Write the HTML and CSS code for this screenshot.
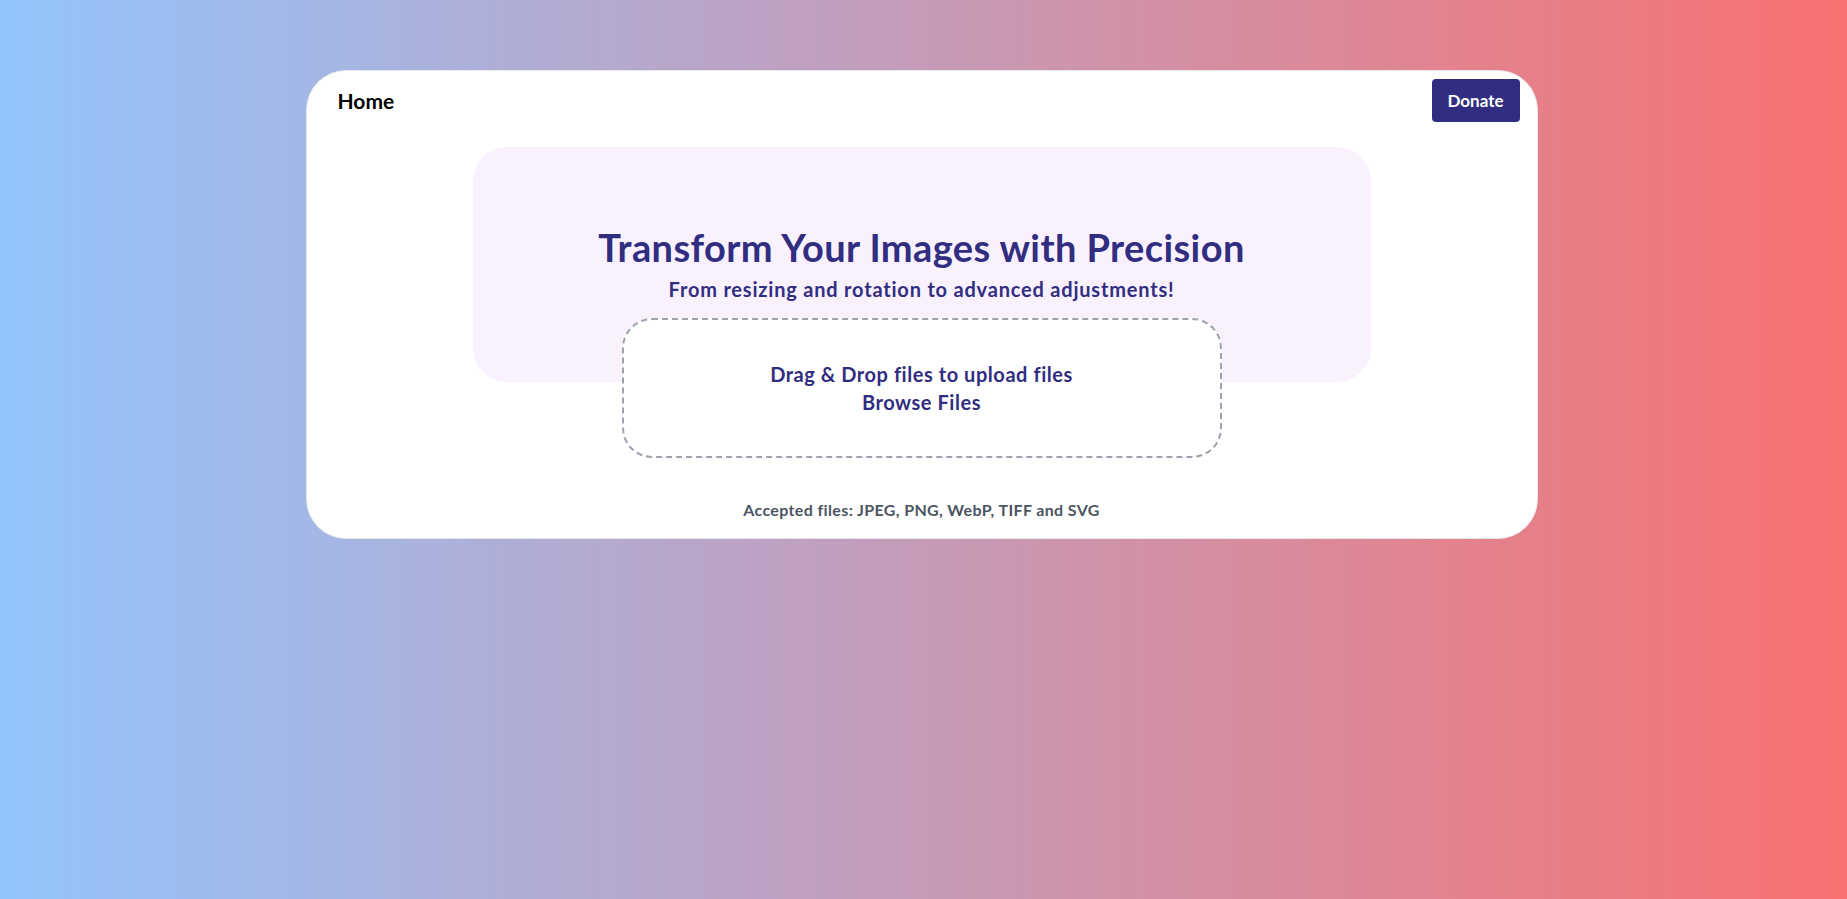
FILE: index.html
```html
<!DOCTYPE html>
<html lang="en">
<head>
<meta charset="utf-8">
<title>Transform Your Images with Precision</title>
<link rel="stylesheet" href="styles.css">
</head>
<body>
<div class="page">
  <main class="card">
    <nav class="nav">
      <a class="home" href="#">Home</a>
      <button class="donate">Donate</button>
    </nav>
    <section class="hero">
      <h1 class="title">Transform Your Images with Precision</h1>
      <p class="subtitle">From resizing and rotation to advanced adjustments!</p>
    </section>
    <div class="dropzone">
      <p class="drop-text">Drag &amp; Drop files to upload files</p>
      <p class="drop-text">Browse Files</p>
    </div>
    <p class="accepted">Accepted files: JPEG, PNG, WebP, TIFF and SVG</p>
  </main>
</div>
</body>
</html>
```

FILE: styles.css
```css
* { box-sizing: border-box; }
html, body { margin: 0; padding: 0; }
body {
  font-family: Lato, "Open Sans", "Liberation Sans", sans-serif;
  min-height: 899px;
  background: linear-gradient(to right, #93c5fd, #f87171);
}
.page {
  padding-top: 70px;
  padding-right: 4px;
}
.card {
  width: 1232px;
  margin: 0 auto;
  background: #fff;
  border: 1px solid #e5e7eb;
  border-radius: 40px;
  padding: 8px 17px 16px 31px;
  display: flex;
  flex-direction: column;
  align-items: center;
}
.nav {
  width: 100%;
  display: flex;
  justify-content: space-between;
  align-items: center;
}
.home {
  color: #000;
  text-decoration: none;
  font-weight: 700;
  font-size: 21px;
}
.donate {
  background: #312e81;
  color: #fff;
  border: none;
  border-radius: 4px;
  font-family: inherit;
  font-weight: 700;
  font-size: 17px;
  width: 88px;
  height: 43px;
  padding: 0;
}
.hero {
  margin-top: 25px;
  margin-left: -14px;
  width: 898px;
  background: #f9f1fe;
  border-radius: 34px;
  padding: 80px 20px 79px;
  text-align: center;
  color: #312e81;
}
.title {
  margin: 0;
  font-size: 38px;
  line-height: 40px;
  font-weight: 700;
  letter-spacing: 0.4px;
}
.subtitle {
  margin: 8px 0 0;
  font-size: 20px;
  line-height: 28px;
  font-weight: 700;
  letter-spacing: 0.8px;
}
.dropzone {
  margin-top: -64px;
  margin-left: -14px;
  width: 600px;
  background: #fff;
  border: 2px dashed #9ca3af;
  border-radius: 30px;
  padding: 40px 20px;
  text-align: center;
  color: #312e81;
}
.drop-text {
  margin: 0;
  font-size: 20px;
  line-height: 28px;
  font-weight: 700;
  letter-spacing: 0.55px;
}
.accepted {
  margin: 40px 0 0 -14px;
  font-size: 16px;
  line-height: 24px;
  font-weight: 700;
  color: #4b5563;
  letter-spacing: 0.37px;
}
```
